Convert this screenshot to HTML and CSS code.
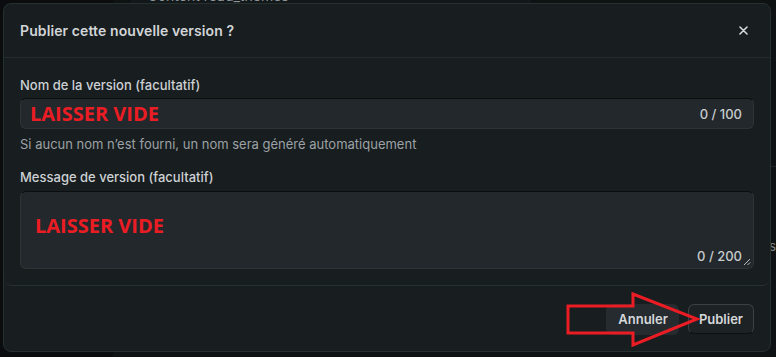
FILE: index.html
```html
<!DOCTYPE html>
<html lang="fr">
<head>
<meta charset="utf-8">
<title>Publier cette nouvelle version ?</title>
<link rel="stylesheet" href="styles.css">
</head>
<body>
<div class="page">
  <aside class="sidebar"></aside>
  <main class="main">
    <div class="top-card">Content read_themes</div>
    <div class="side-rows">
      <div class="row-line"></div>
      <div class="row-text">Pos</div>
      <div class="row-text second">Tags</div>
    </div>
  </main>
</div>

<div class="dialog" role="dialog">
  <header class="dialog-header">
    <h2 class="dialog-title">Publier cette nouvelle version ?</h2>
    <button class="close-btn" aria-label="Fermer">
      <svg width="9" height="9" viewBox="0 0 9 9"><path d="M1 1L8 8M8 1L1 8" stroke="#d4d7d9" stroke-width="1.6" stroke-linecap="round"/></svg>
    </button>
  </header>
  <section class="dialog-body">
    <label class="field-label">Nom de la version (facultatif)</label>
    <div class="input">
      <span class="annot">LAISSER VIDE</span>
      <span class="counter">0 / 100</span>
    </div>
    <p class="helper">Si aucun nom n’est fourni, un nom sera généré automatiquement</p>
    <label class="field-label second">Message de version (facultatif)</label>
    <div class="textarea">
      <span class="annot">LAISSER VIDE</span>
      <span class="counter">0 / 200</span>
      <svg class="grip" width="8" height="8" viewBox="0 0 8 8"><path d="M7 1L1 7M7 4.5L4.5 7" stroke="#b8bcbf" stroke-width="1"/></svg>
    </div>
  </section>
  <footer class="dialog-footer">
    <button class="btn btn-cancel">Annuler</button>
    <button class="btn btn-primary">Publier</button>
  </footer>
</div>

<svg class="arrow" width="776" height="357" viewBox="0 0 776 357">
  <polygon points="568,306 633,306 633,294 697,319 633,345 633,333 568,333" fill="none" stroke="#ea1c24" stroke-width="3" stroke-linejoin="miter"/>
</svg>
</body>
</html>
```

FILE: styles.css
```css
* { box-sizing: border-box; }
html, body {
  margin: 0;
  padding: 0;
  width: 776px;
  height: 357px;
  overflow: hidden;
  background: #0c0f10;
  font-family: Inter, "Noto Sans", sans-serif;
}
.page {
  display: flex;
  width: 776px;
  height: 357px;
}
.sidebar {
  width: 129px;
  background: #0a0c0d;
}
.main {
  flex: 1;
  background: #0e1213;
  display: flex;
  flex-direction: column;
}
.top-card {
  margin-left: 18px;
  margin-top: -12px;
  padding-left: 16px;
  height: 16px;
  line-height: 16px;
  font-size: 14px;
  color: #8d9497;
  background: #121719;
  width: 400px;
}
.side-rows {
  margin-top: 162px;
  margin-left: 630px;
}
.row-line {
  height: 1px;
  background: #1e2628;
}
.row-text {
  margin-top: 6px;
  font-size: 13px;
  line-height: 18px;
  color: #7d8487;
  margin-left: 3px;
}
.row-text.second {
  margin-top: 46px;
}

.dialog {
  position: absolute;
  left: 3px;
  top: 3px;
  width: 768px;
  height: 349px;
  background: #181d1f;
  border: 1px solid #26302f;
  border-radius: 8px;
  display: flex;
  flex-direction: column;
  overflow: hidden;
}
.dialog-header {
  height: 54px;
  padding: 0 16px;
  display: flex;
  align-items: center;
  justify-content: space-between;
  border-bottom: 1px solid #232c2d;
}
.dialog-title {
  margin: 0;
  font-size: 14px;
  font-weight: 600;
  color: #d2d5d8;
  letter-spacing: 0.1px;
}
.close-btn {
  width: 22px;
  height: 22px;
  padding: 0;
  background: none;
  border: 0;
  display: flex;
  align-items: center;
  justify-content: center;
}
.dialog-body {
  padding: 17px 16px 16px;
  border-bottom: 1px solid #253032;
  border-radius: 0 0 8px 8px;
  display: flex;
  flex-direction: column;
}
.field-label {
  font-size: 13px;
  font-weight: 500;
  line-height: 20px;
  color: #cdd1d4;
  margin-bottom: 3px;
}
.field-label.second {
  margin-top: 14px;
  margin-bottom: 4px;
}
.input {
  height: 31px;
  background: #22282b;
  border: 1px solid #2d3437;
  border-top-color: #0b0e0f;
  border-radius: 6px;
  display: flex;
  align-items: center;
  justify-content: space-between;
  padding: 0 11px 0 9px;
}
.annot {
  font-family: "Open Sans", "Noto Sans", sans-serif;
  font-weight: 700;
  font-size: 20px;
  line-height: 24px;
  color: #ea1c24;
}
.counter {
  font-size: 13px;
  font-weight: 500;
  color: #c8ccce;
  line-height: 18px;
}
.helper {
  margin: 6px 0 0;
  font-size: 13px;
  line-height: 18px;
  color: #9ca2a6;
}
.textarea {
  position: relative;
  height: 78px;
  background: #22282b;
  border: 1px solid #2d3437;
  border-top-color: #0b0e0f;
  border-radius: 6px;
  display: flex;
  flex-direction: column;
  align-items: flex-start;
  padding: 22px 11px 3px 14px;
}
.textarea .counter {
  margin-top: auto;
  align-self: flex-end;
}
.grip {
  position: absolute;
  right: 2px;
  bottom: 2px;
}
.dialog-footer {
  flex: 1;
  display: flex;
  align-items: center;
  justify-content: flex-end;
  gap: 9px;
  padding: 1px 16px 0;
}
.btn {
  font-family: Inter, "Noto Sans", sans-serif;
  font-size: 13px;
  font-weight: 600;
  border-radius: 6px;
  height: 31px;
  color: #d5d8da;
  cursor: pointer;
}
.btn-cancel {
  background: #252b2e;
  border: 0;
  padding: 0 11px 0 12px;
}
.btn-primary {
  background: #1d2225;
  border: 1px solid #3b4145;
  border-bottom-color: #0d1011;
  padding: 0 10px;
  height: 30px;
}
.arrow {
  position: absolute;
  left: 0;
  top: 0;
  pointer-events: none;
}
```
